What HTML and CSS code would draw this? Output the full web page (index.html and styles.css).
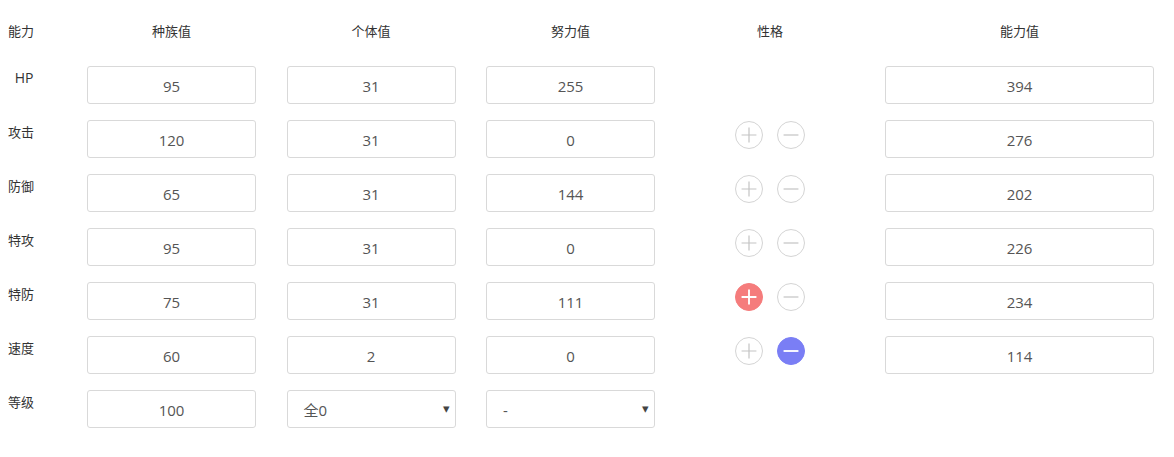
FILE: index.html
```html
<!DOCTYPE html>
<html lang="zh">
<head>
<meta charset="utf-8">
<link rel="stylesheet" href="styles.css">
</head>
<body>
<div class="calc">
  <div class="row head">
    <div class="lab"><span class="lab-text">能力</span></div>
    <div class="col">种族值</div>
    <div class="col">个体值</div>
    <div class="col">努力值</div>
    <div class="col">性格</div>
    <div class="col wide">能力值</div>
  </div>

  <div class="row">
    <div class="lab"><span class="lab-text hp">HP</span></div>
    <div class="col"><input class="box" value="95"></div>
    <div class="col"><input class="box" value="31"></div>
    <div class="col"><input class="box" value="255"></div>
    <div class="col nat"></div>
    <div class="col wide"><input class="box" value="394"></div>
  </div>

  <div class="row">
    <div class="lab"><span class="lab-text">攻击</span></div>
    <div class="col"><input class="box" value="120"></div>
    <div class="col"><input class="box" value="31"></div>
    <div class="col"><input class="box" value="0"></div>
    <div class="col nat">
      <span class="btn"><svg viewBox="0 0 28 28"><path d="M14 6v16M6 14h16"/></svg></span>
      <span class="btn"><svg viewBox="0 0 28 28"><path d="M6 14h16"/></svg></span>
    </div>
    <div class="col wide"><input class="box" value="276"></div>
  </div>

  <div class="row">
    <div class="lab"><span class="lab-text">防御</span></div>
    <div class="col"><input class="box" value="65"></div>
    <div class="col"><input class="box" value="31"></div>
    <div class="col"><input class="box" value="144"></div>
    <div class="col nat">
      <span class="btn"><svg viewBox="0 0 28 28"><path d="M14 6v16M6 14h16"/></svg></span>
      <span class="btn"><svg viewBox="0 0 28 28"><path d="M6 14h16"/></svg></span>
    </div>
    <div class="col wide"><input class="box" value="202"></div>
  </div>

  <div class="row">
    <div class="lab"><span class="lab-text">特攻</span></div>
    <div class="col"><input class="box" value="95"></div>
    <div class="col"><input class="box" value="31"></div>
    <div class="col"><input class="box" value="0"></div>
    <div class="col nat">
      <span class="btn"><svg viewBox="0 0 28 28"><path d="M14 6v16M6 14h16"/></svg></span>
      <span class="btn"><svg viewBox="0 0 28 28"><path d="M6 14h16"/></svg></span>
    </div>
    <div class="col wide"><input class="box" value="226"></div>
  </div>

  <div class="row">
    <div class="lab"><span class="lab-text">特防</span></div>
    <div class="col"><input class="box" value="75"></div>
    <div class="col"><input class="box" value="31"></div>
    <div class="col"><input class="box" value="111"></div>
    <div class="col nat">
      <span class="btn plus-on"><svg viewBox="0 0 28 28"><path d="M14 6v16M6 14h16"/></svg></span>
      <span class="btn"><svg viewBox="0 0 28 28"><path d="M6 14h16"/></svg></span>
    </div>
    <div class="col wide"><input class="box" value="234"></div>
  </div>

  <div class="row">
    <div class="lab"><span class="lab-text">速度</span></div>
    <div class="col"><input class="box" value="60"></div>
    <div class="col"><input class="box" value="2"></div>
    <div class="col"><input class="box" value="0"></div>
    <div class="col nat">
      <span class="btn"><svg viewBox="0 0 28 28"><path d="M14 6v16M6 14h16"/></svg></span>
      <span class="btn minus-on"><svg viewBox="0 0 28 28"><path d="M6 14h16"/></svg></span>
    </div>
    <div class="col wide"><input class="box" value="114"></div>
  </div>

  <div class="row">
    <div class="lab"><span class="lab-text">等级</span></div>
    <div class="col"><input class="box" value="100"></div>
    <div class="col">
      <div class="sel"><span class="sel-val">全0</span><span class="caret">▾</span></div>
    </div>
    <div class="col">
      <div class="sel"><span class="sel-val">-</span><span class="caret">▾</span></div>
    </div>
    <div class="col nat"></div>
    <div class="col wide"></div>
  </div>
</div>
</body>
</html>
```

FILE: styles.css
```css
* { box-sizing: border-box; }

body {
  margin: 0;
  background: #fff;
  font-family: "Open Sans", "Noto Sans CJK SC", sans-serif;
  color: #333;
}

.calc {
  width: 1174px;
  padding-top: 20px;
}

.row {
  display: flex;
  height: 54px;
}

.row.head {
  height: 46px;
  font-family: "Noto Sans CJK SC", sans-serif;
  font-size: 13px;
  line-height: 22px;
  color: #333;
}

.lab {
  width: 72px;
  padding-left: 8px;
}

.lab-text {
  display: inline-block;
  width: 26px;
  text-align: center;
  font-family: "Noto Sans CJK SC", sans-serif;
  font-size: 13px;
  line-height: 20px;
  color: #333;
}

.lab-text.hp {
  font-family: "Open Sans", sans-serif;
  font-size: 14px;
  line-height: 20px;
  padding-left: 6px;
}

.col {
  width: 199.5px;
  padding: 0 15.5px 0 15px;
  text-align: center;
}

.col.wide {
  width: 301px;
  padding-right: 17px;
}

.box {
  display: block;
  width: 100%;
  height: 38px;
  border: 1px solid #d9d9d9;
  border-radius: 3px;
  background: #fff;
  text-align: center;
  font-family: "Open Sans", "Noto Sans CJK SC", sans-serif;
  font-size: 15px;
  color: #555;
  padding: 1px 6px 0;
  outline: none;
}

.nat {
  display: flex;
  justify-content: center;
  gap: 14px;
  padding-top: 1px;
}

.btn {
  display: block;
  width: 28px;
  height: 28px;
  border-radius: 50%;
  border: 1px solid #d4d4d4;
  background: #fff;
}

.btn svg {
  display: block;
  width: 26px;
  height: 26px;
}

.btn path {
  stroke: #c4c4c4;
  stroke-width: 1.3;
  fill: none;
}

.btn.plus-on {
  background: #f57c7c;
  border-color: #f57c7c;
}

.btn.minus-on {
  background: #7a7ef5;
  border-color: #7a7ef5;
}

.btn.plus-on path,
.btn.minus-on path {
  stroke: #fff;
  stroke-width: 2;
}

.sel {
  position: relative;
  display: flex;
  align-items: center;
  height: 38px;
  border: 1px solid #d9d9d9;
  border-radius: 3px;
  background: #fff;
  padding: 1px 0 0 16px;
  font-family: "Open Sans", "Noto Sans CJK SC", sans-serif;
  font-size: 15px;
  color: #555;
  text-align: left;
}

.caret {
  position: absolute;
  right: 5px;
  top: 8px;
  font-size: 13px;
  color: #444;
}
```
